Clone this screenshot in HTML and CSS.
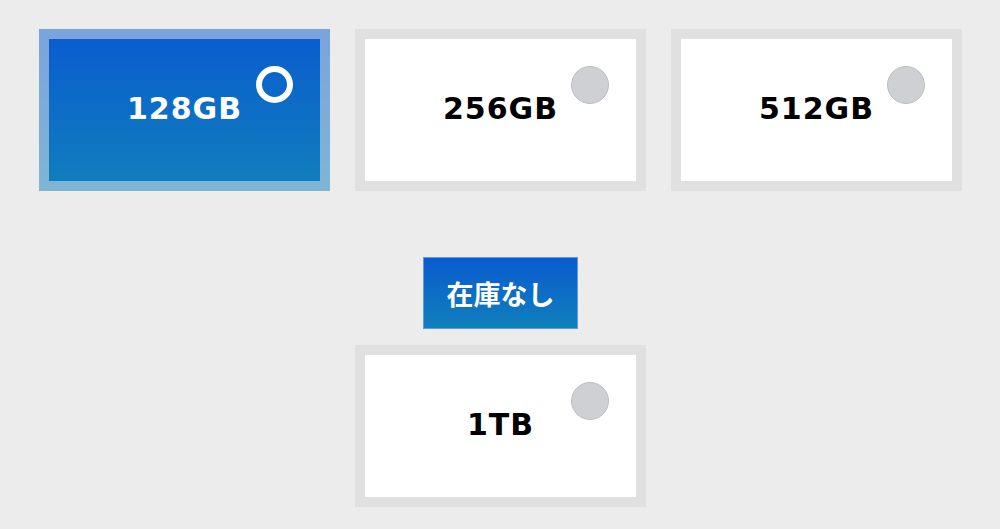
FILE: index.html
```html
<!DOCTYPE html>
<html lang="ja">
<head>
  <meta charset="UTF-8">
  <title>容量を選択</title>
  <link rel="stylesheet" href="styles.css">
</head>
<body>

  <ul class="options">
    <li class="option">
      <label class="card is-selected">
        <span class="card-name">128GB</span>
        <span class="radio"></span>
      </label>
    </li>
    <li class="option">
      <label class="card">
        <span class="card-name">256GB</span>
        <span class="radio"></span>
      </label>
    </li>
    <li class="option">
      <label class="card">
        <span class="card-name">512GB</span>
        <span class="radio"></span>
      </label>
    </li>
    <li class="option option-soldout">
      <div class="stock">在庫なし</div>
      <label class="card">
        <span class="card-name">1TB</span>
        <span class="radio"></span>
      </label>
    </li>
  </ul>

</body>
</html>
```

FILE: styles.css
```css
body {
  margin: 0;
  padding: 29px 0 0 1px;
  background-color: #ececec;
  font-family: "DejaVu Sans", Verdana, sans-serif;
}
.options {
  list-style: none;
  margin: 0 auto;
  padding: 0;
  width: 923px;
  display: flex;
  flex-wrap: wrap;
  justify-content: center;
  column-gap: 25px;
  row-gap: 66px;
}
.option {
  width: 291px;
}
.option-soldout {
  display: flex;
  flex-direction: column;
  align-items: center;
}
.card {
  position: relative;
  box-sizing: border-box;
  width: 291px;
  height: 162px;
  border: 10px solid #e0e0e0;
  background: white;
  display: flex;
  align-items: center;
  justify-content: center;
  cursor: pointer;
}
.card-name {
  font-size: 30px;
  font-weight: bold;
  letter-spacing: 1px;
  color: #000;
  margin-bottom: 4px;
}
.radio {
  position: absolute;
  top: 27px;
  right: 27px;
  box-sizing: border-box;
  width: 38px;
  height: 38px;
  border-radius: 50%;
  background: #cfd0d3;
  border: 1.5px solid #bdbec1;
}
.card.is-selected {
  border-color: rgba(236, 236, 236, 0.5);
  background: linear-gradient(#0a5bcf, #1080bc) border-box;
}
.card.is-selected .card-name {
  color: white;
}
.card.is-selected .radio {
  background: transparent;
  border: 6px solid white;
  width: 37px;
  height: 37px;
}
.stock {
  box-sizing: border-box;
  width: 155px;
  height: 72px;
  margin-bottom: 16px;
  border: 1px solid #5f9be0;
  background: linear-gradient(#0a5bcf, #1080bc);
  color: white;
  font-family: "Noto Sans CJK JP", sans-serif;
  font-size: 27px;
  font-weight: bold;
  display: flex;
  align-items: center;
  justify-content: center;
}
```
